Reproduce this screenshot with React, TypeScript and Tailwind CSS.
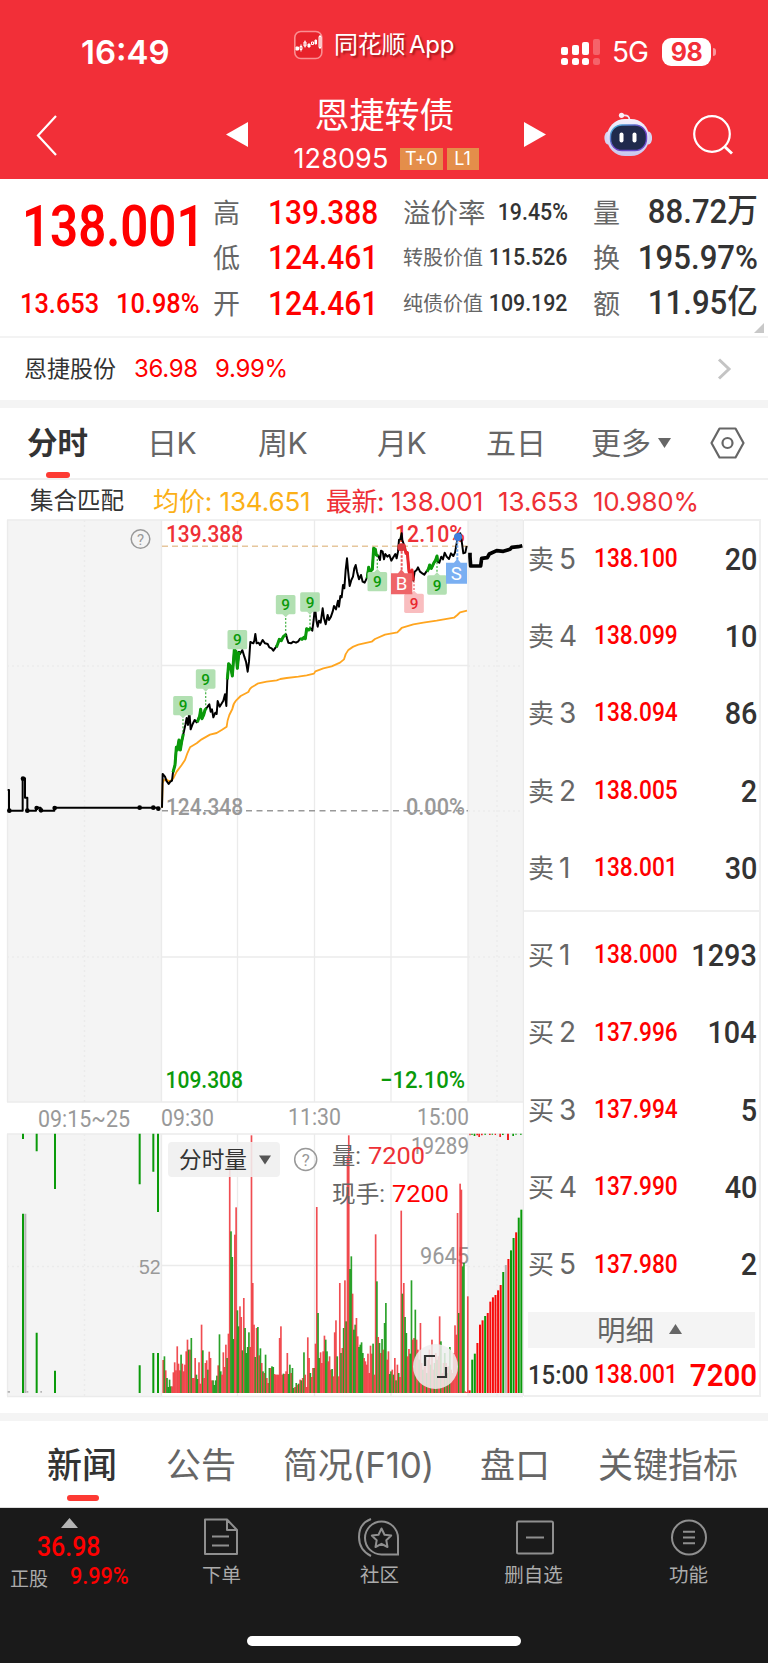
import type { ReactNode } from "react";

const asks = [
  ["卖5", "138.100", "20"],
  ["卖4", "138.099", "10"],
  ["卖3", "138.094", "86"],
  ["卖2", "138.005", "2"],
  ["卖1", "138.001", "30"],
];

const bids = [
  ["买1", "138.000", "1293"],
  ["买2", "137.996", "104"],
  ["买3", "137.994", "5"],
  ["买4", "137.990", "40"],
  ["买5", "137.980", "2"],
];

// one bar per minute, negative = green (falling)
const volumes = [
  99, -110, 68, -45, -18, -40, -20, 20, 62, 92, 68, 140, 88, 68, -115, 88, 65, 85, 125, 160, -130, 130, -165, 45, 45,
  105, -55, -42, 92, 28, 205, -128, 45, 90, 98, -70, 124, 105, 38, -38, -24, -38, -52, 83, -176, -65, 55, 122, 78, 145,
  -105, 178, 730, -485, -408, -162, 475, 557, -248, -200, 260, 228, -128, 285, -195, -120, -138, -182, 138, 773, 330,
  205, -108, 195, -198, 113, -134, 90, -65, 60, -115, 45, 30, -75, 75, -80, -78, 57, 55, 55, 55, 165, 200, 55, -58,
  57, 65, 120, -57, -85, 60, -75, -15, 18, -30, 25, -28, 40, -38, 45, -122, 55, 18, 167, 105, -60, 48, 75, -75, 148,
  558, -240, -105, 122, 90, 125, 172, -160, -125, 95, 110, 70, -72, 50, 182, 218, -110, 50, 330, -120, 135, -195, 338,
  -215, 710, 773, -372, -410, 298, -190, -205, 225, 170, -138, -145, -152, -120, 105, 95, 85, 118, 60, 142, 118, -148,
  55, 476, -335, 168, -150, 120, -162, 130, -210, -270, 100, 125, -57, -65, 70, -55, 105, -38, 85, -60, 48, 547, -298,
  330, -228, -180, 110, 132, -118, -338, 160, 165, -250, 160, 130, -100, 210, 90, -70, 80, 110, -60, 100, 130, -85,
  160, 70, -90, 120, -100, 110, 230, -155, 60, 90, -120, 90, -60, 80, -138, 70, 60, 120, 203, 175, 540, -240, 628,
  610, -380, -390, 5, 3, 290,
];

const closingBars = [
  8, -100, -118, 150, 205, 218, -231, 240, 274, 287, 294, 308, 324, -363, 0, 402, -428, -465, 482, -526, -550,
];

const metrics = [
  { a: "高", av: "139.388", b: "溢价率", bv: "19.45%", c: "量", cv: "88.72", unit: "万" },
  { a: "低", av: "124.461", b: "转股价值", bv: "115.526", c: "换", cv: "195.97%", unit: "" },
  { a: "开", av: "124.461", b: "纯债价值", bv: "109.192", c: "额", cv: "11.95", unit: "亿" },
];

function Num({ className, children }: { className: string; children: ReactNode }) {
  return (
    <span className={`inline-block whitespace-nowrap font-['Roboto'] leading-none ${className}`}>{children}</span>
  );
}

function StatusBar() {
  return (
    <div className="grid h-[103px] grid-cols-[294px_1fr_207px] items-start text-white">
      <span className="pt-[35px] pl-[81px] font-['Inter'] text-[33px] leading-[34px] font-semibold">
        16:49
      </span>
      <div className="flex items-center gap-[11px] pt-7">
        <svg width="29" height="32" viewBox="0 0 29 32">
          <rect x="0.8" y="2.5" width="27" height="27" rx="6" fill="#e8222b" stroke="#fa8f92" strokeWidth="1.6" />
          <g fill="#fff" stroke="#fff" strokeWidth="1">
            <path d="M2 18h2.500v3H2zM14 15h2v3h-2zM21 11h1.500v4H21z" />
            <path d="M6 17.500h2v3H6zM10 13h2v4h-2zM17.500 13h2v2.500h-2zM25 7.500h2v11h-2zM7 15.500v7M11 11.500v7M26 6v14" fill="none" />
          </g>
        </svg>
        <span className="font-['Inter','Noto_Sans_CJK_SC',sans-serif] text-[24px] leading-[34px] whitespace-nowrap tracking-[-0.2px] [word-spacing:-3px] [text-shadow:2px_2px_2px_rgba(90,0,0,0.5)]">
          同花顺 App
        </span>
      </div>
      <div className="flex items-center pt-[37px]">
        <svg width="40" height="30" viewBox="0 0 40 30" fill="#fff">
          <rect x="0" y="10" width="7" height="8" rx="2" />
          <rect x="11" y="8" width="7" height="10" rx="2" />
          <rect x="21" y="5" width="7" height="13" rx="2" />
          <rect x="32" y="2" width="7" height="16" rx="2" opacity="0.25" />
          <rect x="0" y="21" width="7" height="7" rx="2.500" />
          <rect x="11" y="21" width="7" height="7" rx="2.500" />
          <rect x="21" y="21" width="7" height="7" rx="2.500" />
          <rect x="32" y="21" width="7" height="7" rx="2.500" opacity="0.25" />
        </svg>
        <span className="ml-[11px] w-[38px] font-['Inter'] text-[28px] leading-none tracking-[-1px]">5G</span>
        <span className="ml-3 flex h-7 w-[49px] items-center justify-center rounded-[9px] bg-white font-['Inter'] text-[25px] leading-none font-bold tracking-[-0.5px] text-[#f22f38]">
          98
        </span>
        <span className="ml-0.5 h-2 w-[3px] rounded-r bg-white/50" />
      </div>
    </div>
  );
}

function TitleBar() {
  return (
    <div className="flex h-[76px] items-start text-white">
      <svg className="mt-3 ml-9" width="22" height="42" viewBox="0 0 22 42" fill="none" stroke="#fff" strokeWidth="2.200">
        <path d="M20 1 2 20.500 20 40" />
      </svg>
      <svg className="mt-[19px] ml-[168px]" width="22" height="25" viewBox="0 0 22 25">
        <path d="M22 0v25L0 12.500z" fill="#fff" />
      </svg>
      <div className="-mt-2.5 flex w-[276px] flex-col items-center">
        <div className="-ml-[3px] font-['Noto_Sans_CJK_SC',sans-serif] text-[35px] leading-[40px]">恩捷转债</div>
        <div className="mt-3.5 flex items-center">
          <span className="w-[106px] font-['Inter'] text-[27px] leading-[24px] tracking-[0.1px]">128095</span>
          <span className="flex h-[22px] w-[43px] items-center justify-center bg-[#e48e4a] font-['Inter'] text-[18px] leading-none tracking-[-0.5px]">
            T+0
          </span>
          <span className="ml-1 flex h-[22px] w-8 items-center justify-center bg-[#e48e4a] font-['Inter'] text-[18px] leading-none">
            L1
          </span>
        </div>
      </div>
      <svg className="mt-[19px]" width="22" height="25" viewBox="0 0 22 25">
        <path d="M0 0v25l22-12.500z" fill="#fff" />
      </svg>
      <svg className="mt-[9px] ml-[58px]" width="48" height="45" viewBox="0 0 48 45">
        <defs>
          <linearGradient id="shell" x1="0" y1="0" x2="0" y2="1">
            <stop offset="0" stopColor="#f4f1fd" />
            <stop offset="1" stopColor="#c9c6ee" />
          </linearGradient>
          <linearGradient id="visor" x1="0" y1="0" x2="1" y2="1">
            <stop offset="0" stopColor="#45c4dd" />
            <stop offset="0.5" stopColor="#6b3fc4" />
            <stop offset="1" stopColor="#6c4fd0" />
          </linearGradient>
        </defs>
        <path d="M19 3.500c5-.8 6.500 1.500 6.500 5" fill="none" stroke="#f0e6f5" strokeWidth="1.800" />
        <circle cx="17.500" cy="3.300" r="2.600" fill="#fbeef6" />
        <ellipse cx="4" cy="26" rx="3.600" ry="6.500" fill="#d6d4f2" />
        <ellipse cx="44.500" cy="26" rx="3.600" ry="6.500" fill="#d6d4f2" />
        <rect x="3" y="7" width="42" height="37" rx="18" fill="url(#shell)" />
        <rect x="6.500" y="13" width="36" height="25.500" rx="11.500" fill="#202a4c" stroke="url(#visor)" strokeWidth="1.400" />
        <rect x="15.500" y="20.500" width="4" height="10" rx="2" fill="#fff" />
        <rect x="28.500" y="20.500" width="4" height="10" rx="2" fill="#fff" />
      </svg>
      <svg className="mt-3 ml-[41px]" width="40" height="40" viewBox="0 0 40 40" fill="none" stroke="#fff" strokeWidth="2.200">
        <circle cx="19" cy="19" r="17.800" />
        <path d="M31.500 31.500 39 38.500" strokeWidth="3" />
      </svg>
    </div>
  );
}

function Quote() {
  return (
    <section className="flex h-[158.500px] border-b-2 border-[#f3f3f3] bg-white">
      <div className="w-[213px] shrink-0">
        <Num className="mt-[20px] ml-[22px] origin-left scale-x-[.87] text-[56.500px] leading-[56px] font-semibold text-[#f00]">
          138.001
        </Num>
        <div className="mt-[34px] flex pl-5 text-[#f00]">
          <Num className="w-[96px] origin-left scale-x-[.89] text-[28.500px] font-medium">13.653</Num>
          <Num className="origin-left scale-x-[.89] text-[28.500px] font-medium">10.98%</Num>
        </div>
      </div>
      <div className="relative flex-1 pt-2.5">
        {metrics.map((m) => (
          <div key={m.a} className="flex h-[45.500px] items-center font-['Noto_Sans_CJK_SC',sans-serif] text-[#666]">
            <span className="w-[55px] text-[27px]">{m.a}</span>
            <Num className="w-[135px] origin-left scale-x-[.88] text-[34px] font-medium text-[#f00]">{m.av}</Num>
            <span className="flex w-[165px] items-center justify-between whitespace-nowrap">
              <span className={m.b.length > 3 ? "text-[20px]" : "text-[27.500px]"}>{m.b}</span>
              <Num className="-ml-3 origin-right scale-x-[.89] text-[24px] font-medium text-[#333]">{m.bv}</Num>
            </span>
            <span className="ml-[25px] w-[40px] text-[27px]">{m.c}</span>
            <span className="flex w-[125px] origin-right scale-x-[.93] items-center justify-end text-[#333]">
              <Num className="text-[33.500px] font-medium">{m.cv}</Num>
              {m.unit && <span className="-mt-1.5 text-[33px] leading-none font-medium">{m.unit}</span>}
            </span>
          </div>
        ))}
        <svg className="absolute right-1 bottom-[3px]" width="10" height="10" viewBox="0 0 10 10">
          <path d="M10 0v10H0z" fill="#c8c8c8" />
        </svg>
      </div>
    </section>
  );
}

function StockRow() {
  return (
    <div className="flex h-[62.500px] items-center bg-white pl-6 font-['Inter'] text-[24px] tracking-[-0.3px] text-[#f00]">
      <span className="-mt-[3px] w-[110px] font-['Noto_Sans_CJK_SC',sans-serif] text-[23px] tracking-normal text-[#333]">
        恩捷股份
      </span>
      <span className="w-[81px]">36.98</span>
      <span>9.99%</span>
      <svg className="mr-[36px] ml-auto" width="15" height="22" viewBox="0 0 15 22" fill="none" stroke="#c4c4c4" strokeWidth="3">
        <path d="M2 1.500 12 11 2 20.500" />
      </svg>
    </div>
  );
}

function PeriodTabs() {
  return (
    <nav className="flex h-[72px] items-center border-b-2 border-[#f0f0f0] font-['Inter','Noto_Sans_CJK_SC',sans-serif] text-[30px] whitespace-nowrap text-[#666]">
      <div className="relative ml-[27px] w-[120px] text-[30.500px] font-bold text-[#333]">
        分时
        <span className="absolute -bottom-[12px] left-[19px] h-[6px] w-6 rounded-[3px] bg-[#fd3a33]" />
      </div>
      <span className="w-[111px] tracking-[-0.500px]">日K</span>
      <span className="w-[119px] tracking-[-0.500px]">周K</span>
      <span className="w-[109px] tracking-[-0.500px]">月K</span>
      <span className="w-[105px] text-[30px]">五日</span>
      <span>更多</span>
      <svg className="ml-[7px]" width="13" height="10" viewBox="0 0 13 10">
        <path d="M0 0h13L6.500 10z" fill="#666" />
      </svg>
      <svg className="ml-[39px]" width="35" height="32" viewBox="0 0 35 32" fill="none" stroke="#666" strokeWidth="2.200">
        <path d="M9.500 1.500h16L33.500 16l-8 14.500h-16L1.500 16z" strokeLinejoin="round" />
        <circle cx="17.500" cy="16" r="5" />
      </svg>
    </nav>
  );
}

function Legend() {
  return (
    <div className="flex h-[39px] items-center pt-[3px] font-['Inter','Noto_Sans_CJK_SC',sans-serif] text-[26px] whitespace-nowrap tracking-[-0.500px] text-[#ee3036]">
      <span className="ml-[30px] w-[123px] text-[23.500px] tracking-normal text-[#333]">集合匹配</span>
      <span className="w-[173px] tracking-[-0.100px] text-[#fbb017]">均价: 134.651</span>
      <span className="w-[65px]">最新:</span>
      <span className="w-[107px] tracking-[0px]">138.001</span>
      <span className="w-[95px] tracking-[0px]">13.653</span>
      <span className="tracking-[-0.300px]">10.980%</span>
    </div>
  );
}

function Flag({ x, y, dir = 0, tip = 0, color = "#b2e0b2", ink = "#0a9a0a" }: {
  x: number;
  y: number;
  dir?: number;
  tip?: number;
  color?: string;
  ink?: string;
}) {
  return (
    <g>
      {dir !== 0 && (
        <path d={`M${x} ${y + dir * 29}V${tip}`} stroke={ink} strokeWidth="4" strokeDasharray="6 5" opacity="0.7" />
      )}
      <rect x={x - 29.5} y={y - 29} width="59" height="58" rx="5" fill={color} />
      {dir !== 0 && (
        <path d={`M${x - 10} ${y + dir * 28}h20l-10 ${dir * 10}z`} fill={color} />
      )}
      <text x={x} y={y + 17} textAnchor="middle" fontSize="46" fontWeight="500" fill={ink}>
        9
      </text>
    </g>
  );
}

function Label({ x, y, w, size = 23.5, fill, weight = 500, children }: {
  x: number;
  y: number;
  w: number;
  size?: number;
  fill: string;
  weight?: number;
  children: string;
}) {
  return (
    <text x={x} y={y} fontSize={size} fontWeight={weight} fill={fill} textLength={w} lengthAdjust="spacingAndGlyphs">
      {children}
    </text>
  );
}

function Chart() {
  return (
    <svg
      className="block shrink-0 font-['Roboto','Noto_Sans_CJK_SC',sans-serif]"
      width="524"
      height="880"
      viewBox="0 519 524 880"
    >
      {/* price panel */}
      <rect x="7" y="520" width="154" height="582" fill="#f4f4f4" />
      <rect x="468" y="520" width="55" height="582" fill="#f4f4f4" />
      <rect x="7" y="1134" width="154" height="262" fill="#f4f4f4" />
      <rect x="468" y="1134" width="55" height="262" fill="#f4f4f4" />
      <g stroke="#ebebeb" strokeWidth="1.3">
        <path d="M7 520H523M7 1102H523M7 1134H523M7 1396.500H523M161.500 665.500H468M161.500 957H468M161.500 1265.500H468" />
        <path d="M161.500 520V1102M161.500 1134V1396M237.500 520V1102M237.500 1134V1396M314.500 520V1102M314.500 1134V1396M391 520V1102M391 1134V1396M468 520V1102M468 1134V1396M523.500 520V1396M7.500 520V1102M7.500 1134V1396" />
        <path
          d="M84.500 520V1102M84.500 1134V1396M497 520V1102M497 1134V1396M7 666H161M468 666H523M7 957H161M468 957H523M7 1266.500H161M468 1266.500H523M468 811H523"
          strokeDasharray="2 3"
        />
      </g>
      <path d="M162 546.300H468" stroke="#e6c69c" strokeWidth="1.600" strokeDasharray="6 4" />
      <path d="M162 810.800H468" stroke="#999" strokeWidth="1.600" strokeDasharray="6 4.500" />

      <Label x={166} y={542} w={77} fill="#ee3036">139.388</Label>
      <Label x={395} y={542} w={70} fill="#ee3036">12.10%</Label>
      <Label x={166} y={814.500} w={77} fill="#999">124.348</Label>
      <Label x={406} y={814.500} w={59} fill="#999">0.00%</Label>
      <Label x={165.500} y={1088} w={77.500} fill="#0a9a0a">109.308</Label>
      <Label x={380} y={1088} w={85} fill="#0a9a0a">−12.10%</Label>

      <g fill="none" stroke="#999" strokeWidth="1.500">
        <circle cx="140.500" cy="539" r="9.300" />
        <circle cx="305.700" cy="1159.500" r="11" />
      </g>
      <text x="140.500" y="544.500" textAnchor="middle" fontSize="15" fill="#999">?</text>
      <text x="305.700" y="1165.500" textAnchor="middle" fontSize="17" fill="#999">?</text>

      <g transform="translate(0 510) scale(.33333)" fill="none" strokeLinejoin="round">
        {/* pre-open auction */}
        <path
          d="M23 840H27V902H68V805H75V863H82V902H108V893H122V902H163V893H475"
          stroke="#000"
          strokeWidth="6"
        />
        <g fill="#000">
          <circle cx="28" cy="902" r="7" />
          <circle cx="69" cy="806" r="7" />
          <circle cx="82" cy="902" r="7" />
          <circle cx="110" cy="894" r="7" />
          <circle cx="123" cy="901" r="7" />
          <circle cx="164" cy="894" r="7" />
          <circle cx="419" cy="893" r="7" />
          <circle cx="460" cy="893" r="7" />
          <circle cx="475" cy="896" r="7" />
        </g>
        <path
          d="M486 893 488 820 492 810 500 808 508 815 520 805 530 785 545 765 555 750 Q562 728 570 712L590 700 605 688 630 674 650 669 665 660 680 650Q682 630 688 615L697 597Q700 580 708 572L722 558 745 546Q750 535 755 532L775 520 800 515L830 511 841 507 860 504 895 500 920 496 942 491 946 484 970 475 995 469 1020 458 1032 448Q1036 430 1045 420 1060 408 1075 404L1115 395 1125 387 1155 374 1192 367 1205 354 1240 343 1270 338 1310 332 1362 323 1372 315 1380 307 1401 302"
          stroke="#ffa51f"
          strokeWidth="5.500"
        />
        <path
          d="M486 893 488 792 495 800 499 812 506 822 511 815 516 812 519 787 525 765 529 712 532 720 537 690 541 720 545 695 550 672 556 645 560 624 564 645 568 604 572 658 578 642 584 630 590 637 599 618 602 598 606 626 611 615 615 600 619 595 623 590 628 583 632 605 636 598 640 622 646 608 650 612 653 573 659 590 664 582 670 572 675 553 679 588 682 508 686 461 692 470 697 498 703 418 708 425 712 475 717 425 720 432 727 420 733 440 738 455 743 485 747 455 751 396 760 400 763 392 766 372 770 400 776 398 780 405 788 390 795 400 803 402 808 412 815 415 820 422 827 412 833 402 838 388 844 392 850 380 858 373 861 385 865 398 873 400 880 395 888 398 895 394 900 386 906 388 912 382 916 386 920 356 926 360 932 355 937 362 941 330 945 290 949 330 953 350 957 332 962 338 968 295 972 325 977 343 983 315 987 330 992 322 998 305 1002 288 1008 298 1014 272 1017 290 1021 258 1025 262 1029 225 1033 235 1037 180 1041 145 1044 180 1049 228 1054 210 1059 200 1063 175 1067 165 1071 185 1077 208 1083 195 1088 215 1094 218 1100 205 1106 172 1110 185 1117 178 1121 115 1126 118 1129 135 1135 138 1140 150 1143 122 1148 125 1152 148 1156 132 1162 140 1168 135 1174 152 1180 142 1186 132 1190 145 1194 125 1197 90 1201 88 1205 70 1207 90 1212 105 1218 130 1222 128 1227 185 1232 195 1236 180 1240 212 1244 185 1250 180 1254 172 1260 185 1267 190 1273 194 1279 185 1285 178 1289 165 1294 175 1301 160 1307 150 1311 138 1313 155 1318 158 1324 140 1329 148 1334 128 1340 140 1347 147 1353 130 1360 138 1365 128 1370 100 1375 72 1381 70 1386 100 1390 130 1396 128 1400 108"
          stroke="#000"
          strokeWidth="6"
        />
        <g stroke="#0a9a0a" strokeWidth="9">
          <path d="M519 787 525 765 529 712 532 720 537 690 541 720 545 695 550 672" />
          <path d="M592 637 599 618 602 598 606 626 611 615 615 600 619 595" />
          <path d="M682 508 686 461 692 470 697 498 703 418 708 425 712 475 717 425" />
          <path d="M829 412 833 402 838 388 844 392 850 380 858 373" />
          <path d="M900 386 906 388 912 382 916 386 920 356 926 360 932 355" />
          <path d="M1102 205 1106 172 1110 185 1117 178 1121 115 1126 118 1129 135 1135 138" />
          <path d="M1281 185 1285 178 1289 165 1294 175 1301 160 1307 150 1311 138 1313 155" />
        </g>
        <path d="M1205 112 1212 105 1218 130 1222 128 1227 185 1232 195 1236 180 1240 212" stroke="#e9282e" strokeWidth="9" />
        <path d="M1410 128V140L1412 168H1442L1445 145 1462 143 1468 132 1490 122 1510 124 1530 118 1535 112 1555 110 1567 107" stroke="#000" strokeWidth="11" />

        <Flag x={549} y={587} dir={1} tip={672} />
        <Flag x={617} y={507} dir={1} tip={595} />
        <Flag x={712} y={389} />
        <Flag x={857} y={284} dir={1} tip={373} />
        <Flag x={930} y={276} dir={1} tip={355} />
        <Flag x={1132} y={215} dir={-1} tip={138} />
        <Flag x={1311} y={225} dir={-1} tip={155} />
        <Flag x={1242} y={280} dir={-1} tip={212} color="#f9bdbf" ink="#e9282e" />

        <path d="M1205 112V190" stroke="#ea5a5e" strokeWidth="6" strokeDasharray="7 5" />
        <path d="M1372 82V158" stroke="#6aa4ee" strokeWidth="6" strokeDasharray="7 5" />
        <circle cx="1204" cy="112" r="12" fill="#d93a3f" />
        <circle cx="1374" cy="81" r="12" fill="#3f80dd" />
        <path d="M1194 190 1204 178 1214 190zM1173 190h64v63h-64z" fill="#ee6468" />
        <path d="M1362 158 1372 146 1382 158zM1338 158h63v63h-63z" fill="#7aaff2" />
        <text x="1205" y="241" textAnchor="middle" fontSize="56" fill="#fff">B</text>
        <text x="1369" y="209" textAnchor="middle" fontSize="56" fill="#fff">S</text>
      </g>

      {/* time axis */}
      <Label x={38} y={1127} w={92} fill="#999" weight={400}>09:15~25</Label>
      <Label x={161} y={1126} w={53} fill="#999" weight={400}>09:30</Label>
      <Label x={288} y={1125} w={53} fill="#999" weight={400}>11:30</Label>
      <Label x={417} y={1125} w={52} fill="#999" weight={400}>15:00</Label>

      {/* volume panel */}
      <Label x={411} y={1154} w={58} fill="#999" weight={400}>19289</Label>
      <Label x={420} y={1263.500} w={49} fill="#999" weight={400}>9645</Label>
      <text x="139" y="1273.500" fontFamily="Liberation Sans" fontSize="19.500" fill="#999">52</text>
      <g transform="translate(0 1100) scale(.33333)">
        <g>
          {volumes.map((v, i) => (
            <rect
              key={i}
              x={487 + i * 3.84}
              y={879 - Math.abs(v)}
              width="5"
              height={Math.abs(v)}
              fill={v < 0 ? "#0a930a" : "#ee3338"}
              opacity="0.87"
            />
          ))}
        </g>
        <g fill="#0a9a0a">
          <path d="M66 101h6v16h-6zM107 101h6v53h-6zM162 101h6v166h-6zM416 101h6v152h-6zM457 101h6v114h-6zM471 101h6v235h-6z" />
          <path d="M66 341h6v538h-6zM107 698h6v181h-6zM162 812h6v67h-6zM416 796h6v83h-6zM457 759h6v120h-6zM471 759h6v120h-6z" />
        </g>
        <path d="M73 341h6v538h-6zM23 873h7v5h-7zM80 873h5v5h-5zM121 873h5v5h-5z" fill="#b5b5b5" />
        {closingBars.map((v, i) => (
          <rect
            key={i}
            x={1406 + i * 7.75}
            y={879 - (Math.abs(v) || 384)}
            width="6"
            height={Math.abs(v) || 384}
            fill={v === 0 ? "#b5b5b5" : v < 0 ? "#0a9a0a" : "#f80a0a"}
          />
        ))}
        <path d="M1408 101h4v5h-4zM1429 101h5v5h-5zM1435 101h5v10h-5zM1443 101h5v5h-5zM1467 101h5v4h-5zM1484 101h4v4h-4zM1498 101h5v10h-5zM1521 101h6v19h-6z" fill="#e22" />
        <path d="M1414 101h4v4h-4zM1421 101h5v7h-5zM1453 101h5v3h-5zM1475 101h4v3h-4zM1506 101h5v4h-5zM1537 101h5v7h-5zM1546 101h4v3h-4zM1560 101h5v3h-5z" fill="#0a9a0a" />
      </g>

      <rect x="168" y="1142" width="112" height="35" rx="4" fill="#efefef" opacity="0.88" />
      <Label x={179} y={1168} w={68} size={23} fill="#333" weight={400}>分时量</Label>
      <path d="M259 1155.500h12l-6 9z" fill="#555" />
      <Label x={332} y={1164} w={29} size={23} fill="#666" weight={400}>量:</Label>
      <Label x={368} y={1164} w={57} size={24} fill="#ee3036" weight={400}>7200</Label>
      <Label x={332} y={1201.500} w={53} size={23} fill="#666" weight={400}>现手:</Label>
      <Label x={392} y={1201.500} w={57} size={24} fill="#f00" weight={400}>7200</Label>

      <circle cx="435.500" cy="1366.500" r="22.500" fill="#eee" opacity="0.85" />
      <path d="M425 1366v-10h10M437 1377h9v-10" fill="none" stroke="#333" strokeWidth="2.200" />
    </svg>
  );
}

function BookRow({ row }: { row: string[] }) {
  return (
    <div className="flex h-[77.300px] items-center">
      <span className="w-[66px] font-['Inter','Noto_Sans_CJK_SC',sans-serif] text-[26px] whitespace-nowrap text-[#666]">
        {row[0][0]}
        <span className="ml-[5px] text-[28px]">{row[0][1]}</span>
      </span>
      <Num className="w-[80px] origin-left scale-x-[.89] text-[25.500px] font-medium text-[#f00]">{row[1]}</Num>
      <span className="flex w-[83px] justify-end">
        <Num className="origin-right scale-x-[.9] text-[32px] font-medium text-[#333]">{row[2]}</Num>
      </span>
    </div>
  );
}

function OrderBook() {
  return (
    <div className="h-[878px] w-[236.500px] border-t-2 border-r-2 border-b-2 border-[#efefef] pl-1">
      <div className="-mt-px">
        {asks.map((r) => (
          <BookRow key={r[0]} row={r} />
        ))}
      </div>
      <div className="mt-[4px] mb-[4px] -ml-1 h-[2px] bg-[#efefef]" />
      {bids.map((r) => (
        <BookRow key={r[0]} row={r} />
      ))}
      <div className="mt-[9px] flex h-9 w-[227px] items-center justify-center bg-[#f4f4f4] pr-1 pb-0.5 font-['Noto_Sans_CJK_SC',sans-serif] text-[28.500px] text-[#666]">
        明细
        <svg className="ml-[15px]" width="13" height="10" viewBox="0 0 13 10">
          <path d="M0 10h13L6.500 0z" fill="#666" />
        </svg>
      </div>
      <div className="flex h-[45px] items-end">
        <Num className="w-[66px] origin-left scale-x-[.92] pb-[5px] text-[26px] font-medium text-[#333]">15:00</Num>
        <Num className="w-[80px] origin-left scale-x-[.89] pb-[5px] text-[25.500px] font-medium text-[#f00]">138.001</Num>
        <span className="flex w-[83px] justify-end">
          <Num className="origin-right scale-x-[.92] pb-[2px] text-[32px] font-semibold text-[#f00]">7200</Num>
        </span>
      </div>
    </div>
  );
}

function InfoTabs() {
  return (
    <nav className="flex h-[87px] items-center border-b border-[#ddd] pt-[3px] font-['Inter','Noto_Sans_CJK_SC',sans-serif] text-[35px] whitespace-nowrap text-[#666]">
      <div className="relative ml-[47px] w-[119px] font-medium text-[#333]">
        新闻
        <span className="absolute -bottom-[9px] left-[20px] h-[6px] w-8 rounded-[3px] bg-[#fd3a33]" />
      </div>
      <span className="w-[117px]">公告</span>
      <span className="w-[197px] tracking-[-0.200px]">简况(F10)</span>
      <span className="w-[118px]">盘口</span>
      <span>关键指标</span>
    </nav>
  );
}

function BottomItem({ label, className, children }: { label: string; className: string; children: ReactNode }) {
  return (
    <div className={`flex flex-col items-center ${className}`}>
      <svg className="mt-2" width="44" height="42" viewBox="0 0 44 42" fill="none" stroke="#8f8f8f" strokeWidth="2">
        {children}
      </svg>
      <span className="mt-[2px] text-[19.500px] leading-[28px]">{label}</span>
    </div>
  );
}

function BottomBar() {
  return (
    <footer className="flex h-[155px] flex-col bg-[#1a1a1a] font-['Noto_Sans_CJK_SC',sans-serif] text-[#ababab]">
      <div className="flex">
        <div className="flex h-[90px] w-[138px] shrink-0 flex-col items-center pt-2.5">
          <svg className="shrink-0" width="17" height="10" viewBox="0 0 17 10">
            <path d="M0 10h17L8.500 0z" fill="#b5b5b5" />
          </svg>
          <Num className="mt-[5px] scale-x-[.89] text-[28px] leading-[28px] font-medium text-[#f00]">36.98</Num>
          <div className="mt-[2px] flex w-[118px] items-center text-[19px] leading-[30px] whitespace-nowrap">
            <span className="w-[60px] shrink-0">正股</span>
            <Num className="-mt-1 origin-left scale-x-[.9] text-[24px] font-medium text-[#f00]">9.99%</Num>
          </div>
        </div>
        <BottomItem label="下单" className="ml-[43px] w-[81px]">
          <path d="M7 3.500h20L37 14v24H5V3.500zM27 3.500V14h10M12 20.500h17M12 29.500h17" strokeLinejoin="round" />
        </BottomItem>
        <BottomItem label="社区" className="ml-[77px] w-[81px]">
          <path d="M23.500 5.500a16.500 16.500 0 1 0 0 33H40V22A16.500 16.500 0 0 0 23.500 5.500zM13 3C5 6 1 13 1 21s4 15 12 19" />
          <path d="m23.500 12.500 3 6.200 6.700.9-4.900 4.700 1.200 6.700-6-3.200-6 3.200 1.200-6.700-4.900-4.700 6.700-.9z" strokeLinejoin="round" />
        </BottomItem>
        <BottomItem label="删自选" className="ml-[73px] w-[81px]">
          <rect x="5" y="5.500" width="36" height="32" rx="1.500" />
          <path d="M14 21.500h18" />
        </BottomItem>
        <BottomItem label="功能" className="ml-[74px] w-[81px]">
          <circle cx="22" cy="21.500" r="17" />
          <path d="M16 15.800h12M16 21.500h12M16 27.200h12" />
        </BottomItem>
      </div>
      <div className="mx-auto mt-auto mb-[17px] h-2.5 w-[274px] rounded-full bg-white" />
    </footer>
  );
}

export default function App() {
  return (
    <div className="h-[1663px] w-[768px] overflow-hidden bg-white">
      <header className="h-[179px] bg-[#f22f38]">
        <StatusBar />
        <TitleBar />
      </header>
      <Quote />
      <StockRow />
      <div className="h-2 bg-[#f4f4f4]" />
      <PeriodTabs />
      <Legend />
      <main className="flex h-[894px] items-start">
        <Chart />
        <OrderBook />
      </main>
      <div className="h-2 bg-[#f4f4f4]" />
      <InfoTabs />
      <BottomBar />
    </div>
  );
}
